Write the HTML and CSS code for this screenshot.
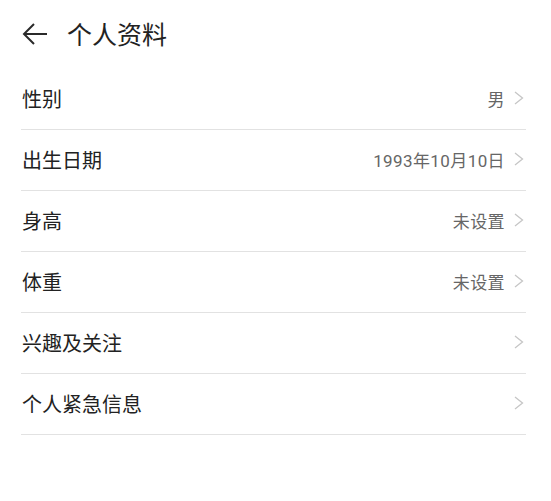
FILE: index.html
```html
<!DOCTYPE html>
<html>
<head>
	<meta charset="utf-8">
	<link rel="stylesheet" href="styles.css">
</head>
<body>
	<div class="header">
		<svg class="back" width="26" height="24" viewBox="0 0 26 24">
			<path d="M12 2 L2 12 L12 22 M2 12 H25" fill="none" stroke="#2a2a2a" stroke-width="2"/>
		</svg>
		<h1>个人资料</h1>
	</div>

	<ul class="list">
		<li><span class="label">性别</span><span class="value">男</span><svg class="chev" width="10" height="14" viewBox="0 0 10 14"><path d="M1 1 L8.5 7 L1 13" fill="none" stroke="#c6c6c6" stroke-width="1.3"/></svg></li>
		<li><span class="label">出生日期</span><span class="value">1993年10月10日</span><svg class="chev" width="10" height="14" viewBox="0 0 10 14"><path d="M1 1 L8.5 7 L1 13" fill="none" stroke="#c6c6c6" stroke-width="1.3"/></svg></li>
		<li><span class="label">身高</span><span class="value">未设置</span><svg class="chev" width="10" height="14" viewBox="0 0 10 14"><path d="M1 1 L8.5 7 L1 13" fill="none" stroke="#c6c6c6" stroke-width="1.3"/></svg></li>
		<li><span class="label">体重</span><span class="value">未设置</span><svg class="chev" width="10" height="14" viewBox="0 0 10 14"><path d="M1 1 L8.5 7 L1 13" fill="none" stroke="#c6c6c6" stroke-width="1.3"/></svg></li>
		<li><span class="label">兴趣及关注</span><span class="value"></span><svg class="chev" width="10" height="14" viewBox="0 0 10 14"><path d="M1 1 L8.5 7 L1 13" fill="none" stroke="#c6c6c6" stroke-width="1.3"/></svg></li>
		<li><span class="label">个人紧急信息</span><span class="value"></span><svg class="chev" width="10" height="14" viewBox="0 0 10 14"><path d="M1 1 L8.5 7 L1 13" fill="none" stroke="#c6c6c6" stroke-width="1.3"/></svg></li>
	</ul>
</body>
</html>
```

FILE: styles.css
```css
body {
	margin: 0;
	background: #fff;
	font-family: Roboto, "Noto Sans CJK SC", sans-serif;
	color: #222;
}

.header {
	height: 69px;
	display: flex;
	align-items: center;
	padding-left: 22px;
	gap: 19px;
}

.back {
	margin-bottom: 2px;
}

.header h1 {
	margin: 0 0 4px;
	font-size: 25px;
	font-weight: normal;
	font-family: "Noto Sans CJK SC", sans-serif;
}

.list {
	list-style: none;
	margin: 0 25px 0 21px;
	padding: 0;
}

.list li {
	height: 60px;
	display: flex;
	align-items: center;
	border-bottom: 1px solid #e2e2e2;
	padding-right: 2px;
}

.label {
	flex: 1;
	font-size: 20px;
	padding-left: 1px;
	margin-bottom: 2px;
	font-family: "Noto Sans CJK SC", sans-serif;
}

.value {
	font-size: 17px;
	letter-spacing: 0.4px;
	color: #666;
	margin-right: 9px;
	margin-bottom: 2px;
}

.chev {
	margin-bottom: 2px;
}
```
